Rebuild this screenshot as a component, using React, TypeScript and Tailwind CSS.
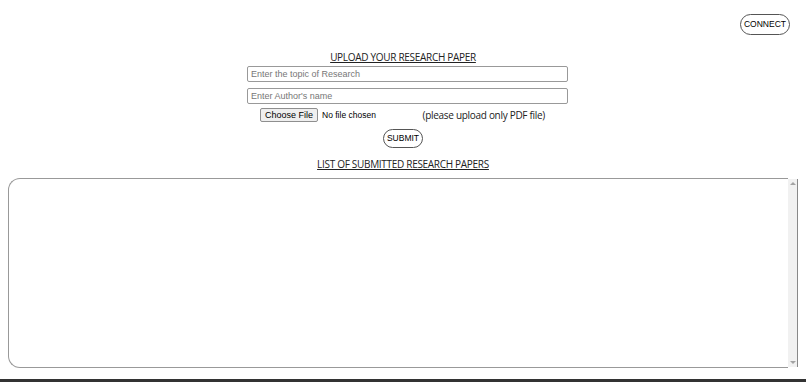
import React from "react";

export default function App() {
  return (
    <div className="relative w-[806px] h-[382px] bg-white overflow-hidden" style={{ fontFamily: '"Open Sans", sans-serif' }}>
      <div className="flex justify-end pt-[14px] pr-[16px]">
        <button className="h-[21px] px-[3px] rounded-full border border-[#555] bg-white text-[8.5px] text-black leading-none whitespace-nowrap" style={{ fontFamily: '"Liberation Sans", Arial, sans-serif' }}>
          CONNECT
        </button>
      </div>
      <div className="flex flex-col items-center mt-[14px]">
        <div className="text-[10px] tracking-[-0.3px] underline leading-[16px] text-[#222] whitespace-nowrap">UPLOAD YOUR RESEARCH PAPER</div>
        <input
          className="ml-[9px] mt-[1px] w-[321px] h-[16px] border border-[#999] rounded-[2px] px-[3px] text-[9px] placeholder-[#777] outline-none"
          style={{ fontFamily: '"Liberation Sans", Arial, sans-serif' }}
          placeholder="Enter the topic of Research"
        />
        <input
          className="ml-[9px] mt-[6px] w-[321px] h-[16px] border border-[#999] rounded-[2px] px-[3px] text-[9px] placeholder-[#777] outline-none"
          style={{ fontFamily: '"Liberation Sans", Arial, sans-serif' }}
          placeholder="Enter Author's name"
        />
        <div className="ml-[9px] mt-[4px] flex items-center w-[321px] h-[14px] whitespace-nowrap">
          <div className="ml-[13px] flex items-center" style={{ fontFamily: '"Liberation Sans", Arial, sans-serif' }}>
            <span className="h-[14px] px-[4px] border border-[#8f8f8f] rounded-[2px] bg-[#efefef] text-[9px] leading-[12px] text-black">Choose File</span>
            <span className="ml-[4px] text-[8.5px] text-black">No file chosen</span>
          </div>
          <span className="ml-auto mr-[23px] text-[10px] tracking-[-0.3px] text-[#222]">(please upload only PDF file)</span>
        </div>
        <button className="mt-[7px] h-[19px] w-[40px] rounded-full border border-[#555] bg-white text-[8.5px] text-black leading-none whitespace-nowrap" style={{ fontFamily: '"Liberation Sans", Arial, sans-serif' }}>
          SUBMIT
        </button>
        <div className="mt-[8px] text-[10px] tracking-[-0.3px] underline leading-[16px] text-[#222] whitespace-nowrap">LIST OF SUBMITTED RESEARCH PAPERS</div>
      </div>
      <div className="mt-[6px] mx-[8px] flex h-[190px]">
        <div className="flex-1 border border-r-0 border-[#999] rounded-l-[12px]"></div>
        <div className="w-[10px] bg-[#f1f1f1] border-r border-[#888] flex flex-col justify-between items-center py-[3px] mt-[1px] mb-[1px]">
          <div className="w-0 h-0 border-l-[3px] border-r-[3px] border-b-[3px] border-l-transparent border-r-transparent border-b-[#a3a3a3]"></div>
          <div className="w-0 h-0 border-l-[3px] border-r-[3px] border-t-[3px] border-l-transparent border-r-transparent border-t-[#a3a3a3]"></div>
        </div>
      </div>
      <div className="absolute left-0 right-0 bottom-0 h-[3px] bg-[#333]"></div>
    </div>
  );
}
